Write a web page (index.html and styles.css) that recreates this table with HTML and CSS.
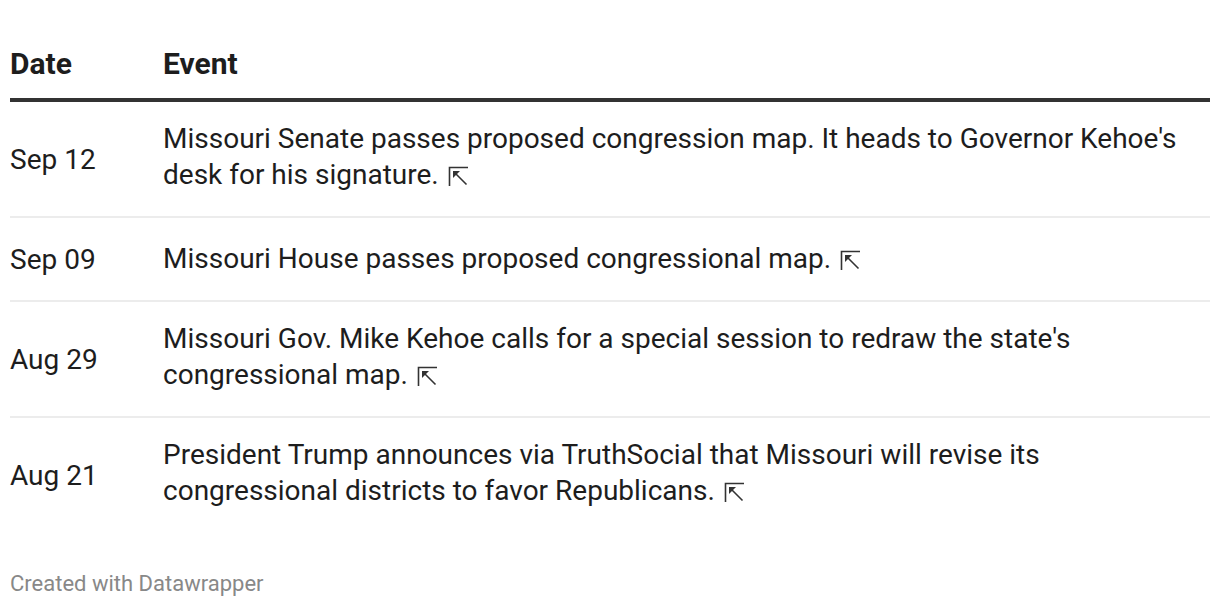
FILE: index.html
```html
<!DOCTYPE html>
<html>
<head>
<meta charset="utf-8">
<link rel="stylesheet" href="styles.css">
</head>
<body>
<div class="chart">
  <table class="tbl">
    <thead>
      <tr><th class="c-date">Date</th><th class="c-event">Event</th></tr>
    </thead>
    <tbody>
      <tr><td class="c-date">Sep 12</td><td class="c-event">Missouri Senate passes proposed congression map. It heads to Governor Kehoe's desk for his signature. <span class="lnk"><svg viewBox="0 0 20 20" width="20" height="20"><path d="M1.5 20V1.5H20" fill="none" stroke="#333" stroke-width="1.6"/><path d="M6 6L18.5 18.5" stroke="#333" stroke-width="1.6"/><path d="M5 5h7l-7 7z" fill="#333"/></svg></span></td></tr>
      <tr><td class="c-date">Sep 09</td><td class="c-event">Missouri House passes proposed congressional map. <span class="lnk"><svg viewBox="0 0 20 20" width="20" height="20"><path d="M1.5 20V1.5H20" fill="none" stroke="#333" stroke-width="1.6"/><path d="M6 6L18.5 18.5" stroke="#333" stroke-width="1.6"/><path d="M5 5h7l-7 7z" fill="#333"/></svg></span></td></tr>
      <tr><td class="c-date">Aug 29</td><td class="c-event">Missouri Gov. Mike Kehoe calls for a special session to redraw the state's congressional map. <span class="lnk"><svg viewBox="0 0 20 20" width="20" height="20"><path d="M1.5 20V1.5H20" fill="none" stroke="#333" stroke-width="1.6"/><path d="M6 6L18.5 18.5" stroke="#333" stroke-width="1.6"/><path d="M5 5h7l-7 7z" fill="#333"/></svg></span></td></tr>
      <tr class="last"><td class="c-date">Aug 21</td><td class="c-event">President Trump announces via TruthSocial that Missouri will revise its congressional districts to favor Republicans. <span class="lnk"><svg viewBox="0 0 20 20" width="20" height="20"><path d="M1.5 20V1.5H20" fill="none" stroke="#333" stroke-width="1.6"/><path d="M6 6L18.5 18.5" stroke="#333" stroke-width="1.6"/><path d="M5 5h7l-7 7z" fill="#333"/></svg></span></td></tr>
    </tbody>
  </table>
  <div class="footer">Created with Datawrapper</div>
</div>
</body>
</html>
```
FILE: styles.css
```css
html, body {
  margin: 0;
  padding: 0;
  background: #fff;
}
body {
  font-family: Roboto, "Liberation Sans", sans-serif;
  color: #1d1d1d;
}
.chart {
  padding: 47px 10px 0 10px;
}
.tbl {
  width: 100%;
  border-collapse: collapse;
}
.tbl th {
  font-weight: 700;
  font-size: 30px;
  line-height: 34px;
  text-align: left;
  padding: 0 0 17px 0;
  border-bottom: 4px solid #333;
  color: #1d1d1d;
}
.tbl td {
  font-size: 28px;
  line-height: 32px;
  padding: 21px 0 25px 0;
  border-bottom: 2px solid #ececec;
  vertical-align: middle;
}
.tbl td.c-date {
  padding: 24px 0 22px 0;
}
.tbl tr.last td {
  border-bottom: none;
}
.c-date {
  width: 153px;
}
.lnk {
  display: inline-block;
  vertical-align: -2px;
  width: 20px;
  height: 20px;
  padding-top: 11px;
  margin-left: 2px;
}
.lnk svg {
  display: block;
}
.footer {
  margin-top: 39px;
  font-size: 22px;
  line-height: 26px;
  color: #888;
}
```
